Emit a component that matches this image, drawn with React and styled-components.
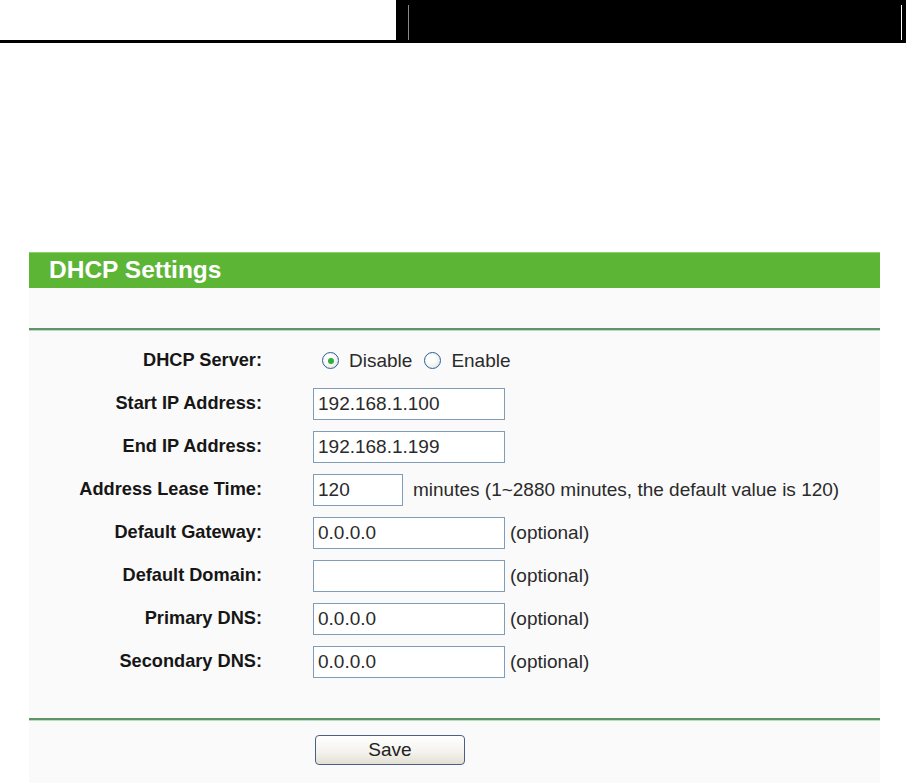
import React from "react";
import styled, { createGlobalStyle } from "styled-components";

const GlobalStyle = createGlobalStyle`
  html, body {
    margin: 0;
    padding: 0;
    background: #ffffff;
    font-family: "Liberation Sans", Arial, sans-serif;
  }
`;

const Page = styled.div`
  width: 906px;
  min-height: 783px;
  overflow: hidden;
`;

const TopBar = styled.div`
  display: flex;
  height: 40px;
  border-bottom: 3px solid #000;
`;

const TopLeft = styled.div`
  flex: 0 0 396px;
  background: #fff;
`;

const TopRight = styled.div`
  flex: 1;
  display: flex;
  background: #000;
  padding: 5px 4px 0 12px;
`;

const TopRule = styled.div`
  flex: 1;
  border-left: 1px solid #8a8a8a;
  border-right: 1px solid #ffffff;
`;

const Panel = styled.div`
  width: 851px;
  margin: 209px 0 0 29px;
  background: #fafafa;
  min-height: 540px;
`;

const PanelTitle = styled.div`
  height: 35px;
  border-top: 1px solid #8fcf6e;
  background: #5db536;
  color: #fff;
  font-weight: bold;
  font-size: 24.5px;
  line-height: 34px;
  padding-left: 20px;
`;

const Blank = styled.div`
  height: 40px;
`;

const Divider = styled.div`
  height: 3px;
  background: linear-gradient(#5f9468 0, #5f9468 2px, #b9dcc0 2px);
`;

const Form = styled.div`
  display: grid;
  grid-template-columns: 284px 1fr;
  grid-auto-rows: 43px;
  padding: 8px 0 35px;
`;

const Label = styled.div`
  display: flex;
  align-items: center;
  justify-content: flex-end;
  padding-right: 51px;
  font-size: 18.2px;
  font-weight: bold;
  color: #161616;
`;

const Value = styled.div`
  display: flex;
  align-items: center;
  font-size: 19px;
  color: #2a2a2a;
`;

const TextBox = styled.div`
  box-sizing: border-box;
  width: ${(p) => (p.$short ? "90px" : "192px")};
  height: 32px;
  border: 1px solid #7f9db9;
  background: #fff;
  padding: 0 4px;
  display: flex;
  align-items: center;
  font-size: 19px;
  color: #2a2a2a;
`;

const Hint = styled.span`
  margin-left: ${(p) => (p.$wide ? "10px" : "5px")};
`;

const RadioItem = styled.label`
  display: flex;
  align-items: center;
  gap: 10px;
  margin-left: ${(p) => (p.$first ? "9px" : "12px")};
`;

const RadioCircle = styled.span`
  box-sizing: border-box;
  width: 17px;
  height: 17px;
  border-radius: 50%;
  border: 1px solid #2c5f96;
  background: radial-gradient(circle at 40% 40%, #ffffff 30%, #dcdcd5 100%);
  display: flex;
  align-items: center;
  justify-content: center;

  &::after {
    content: "";
    width: 6px;
    height: 6px;
    border-radius: 50%;
    background: ${(p) => (p.$checked ? "#2fae3a" : "transparent")};
  }
`;

const ButtonRow = styled.div`
  padding: 14px 0 18px 286px;
`;

const SaveButton = styled.button`
  box-sizing: border-box;
  width: 150px;
  height: 30px;
  border: 1px solid #4a5f8c;
  border-radius: 4px;
  background: linear-gradient(#ffffff 0%, #f4f3ee 55%, #e3e0d3 100%);
  font-family: "Liberation Sans", Arial, sans-serif;
  font-size: 19px;
  color: #222;
  padding: 0;
`;

const fields = [
  { label: "Start IP Address:", value: "192.168.1.100" },
  { label: "End IP Address:", value: "192.168.1.199" },
  {
    label: "Address Lease Time:",
    value: "120",
    short: true,
    hint: "minutes (1~2880 minutes, the default value is 120)",
  },
  { label: "Default Gateway:", value: "0.0.0.0", hint: "(optional)" },
  { label: "Default Domain:", value: "", hint: "(optional)" },
  { label: "Primary DNS:", value: "0.0.0.0", hint: "(optional)" },
  { label: "Secondary DNS:", value: "0.0.0.0", hint: "(optional)" },
];

const App = () => {
  return (
    <Page>
      <GlobalStyle />
      <TopBar>
        <TopLeft />
        <TopRight>
          <TopRule />
        </TopRight>
      </TopBar>
      <Panel>
        <PanelTitle>DHCP Settings</PanelTitle>
        <Blank />
        <Divider />
        <Form>
          <Label>DHCP Server:</Label>
          <Value>
            <RadioItem $first>
              <RadioCircle $checked />
              Disable
            </RadioItem>
            <RadioItem>
              <RadioCircle />
              Enable
            </RadioItem>
          </Value>
          {fields.map((f) => (
            <React.Fragment key={f.label}>
              <Label>{f.label}</Label>
              <Value>
                <TextBox $short={f.short}>{f.value}</TextBox>
                {f.hint ? <Hint $wide={f.short}>{f.hint}</Hint> : null}
              </Value>
            </React.Fragment>
          ))}
        </Form>
        <Divider />
        <ButtonRow>
          <SaveButton>Save</SaveButton>
        </ButtonRow>
      </Panel>
    </Page>
  );
};

export default App;
